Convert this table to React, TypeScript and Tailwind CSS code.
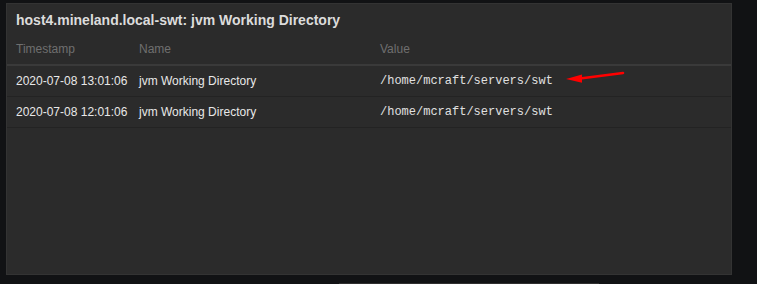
type Row = {
  time: string;
  name: string;
  value: string;
};

const rows: Row[] = [
  { time: "2020-07-08 13:01:06", name: "jvm Working Directory", value: "/home/mcraft/servers/swt" },
  { time: "2020-07-08 12:01:06", name: "jvm Working Directory", value: "/home/mcraft/servers/swt" },
];

// red annotation arrow pointing at the first value
function Arrow() {
  return (
    <svg className="absolute left-[560px] top-[66px]" width="70" height="20" viewBox="0 0 70 20">
      <line x1="63" y1="7" x2="20" y2="12.5" stroke="#f00" strokeWidth="2.6" strokeLinecap="round" />
      <polygon points="6,13 22,8.6 22,16.8" fill="#f00" />
    </svg>
  );
}

export default function App() {
  return (
    <div className="relative h-[284px] w-full overflow-hidden bg-[#111214] pt-[3px] font-['Liberation_Sans',Arial,sans-serif]">
      <div className="ml-[6px] h-[272px] w-[726px] border border-[#333333] bg-[#2b2b2b]">
        <div className="flex h-[32px] items-center pl-[9px] text-[14px] font-bold text-[#dcdcdc]">
          host4.mineland.local-swt: jvm Working Directory
        </div>

        <div className="flex h-[30px] items-center border-b-2 border-[#3a3a3a] pb-[2px] text-[12px] text-[#6f6f6f]">
          <div className="w-[132px] pl-[9px]">Timestamp</div>
          <div className="w-[241px]">Name</div>
          <div>Value</div>
        </div>

        {rows.map((r) => (
          <div key={r.time} className="flex h-[31px] items-center border-b border-[#232323] text-[12px] text-[#e8e8e8]">
            <div className="w-[132px] pl-[9px]">{r.time}</div>
            <div className="w-[241px]">{r.name}</div>
            <div className="font-['Liberation_Mono','Courier_New',monospace] text-[#e0e0e0]">{r.value}</div>
          </div>
        ))}
      </div>

      <div className="ml-[339px] mt-[8px] h-px w-[260px] bg-[#2f2f2f]" />

      <Arrow />
    </div>
  );
}
